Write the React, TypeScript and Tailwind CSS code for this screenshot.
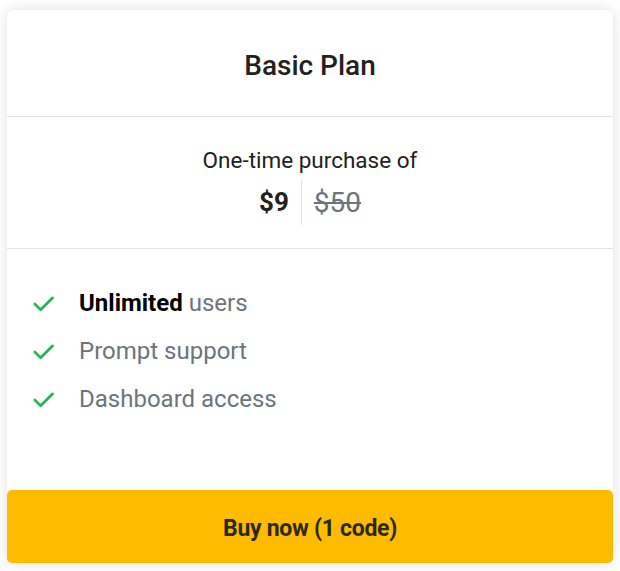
import React from 'react';

const features: { bold?: string; text: string }[] = [
  { bold: 'Unlimited', text: 'users' },
  { text: 'Prompt support' },
  { text: 'Dashboard access' },
];

const Check: React.FC = () => (
  <svg width="23" height="23" viewBox="0 0 24 24" fill="none" className="shrink-0">
    <path d="M3 12.5l6 6L21.5 6" stroke="#1fb84f" strokeWidth="2.7" strokeLinecap="round" strokeLinejoin="round" />
  </svg>
);

export default function App() {
  return (
    <div className="min-h-[571px] w-[620px] bg-white pt-[10px] px-[7px] font-['Roboto',sans-serif]">
      <div className="bg-white rounded-[6px] shadow-[0_0_14px_rgba(0,0,0,0.13)] flex flex-col">
        {/* Header */}
        <div className="h-[107px] flex items-center justify-center border-b border-[#e3e3e3] pt-[5px]">
          <h2 className="text-[28px] font-medium text-[#212121] leading-none">Basic Plan</h2>
        </div>

        {/* Pricing */}
        <div className="h-[132px] flex flex-col items-center border-b border-[#e3e3e3] pt-[30px]">
          <p className="text-[22.5px] text-[#212121] leading-[26px]">One-time purchase of</p>
          <div className="flex items-stretch mt-[7px] h-[45px]">
            <span className="text-[26px] font-bold text-[#212121] pr-[12px] flex items-center">$9</span>
            <span className="w-px bg-[#e3e3e3]" />
            <span className="text-[28px] text-[#6c757d] line-through decoration-2 pl-[12px] flex items-center">$50</span>
          </div>
        </div>

        {/* Features */}
        <ul className="flex flex-col pt-[30px] pb-[67px] px-[25px]">
          {features.map((f, i) => (
            <li key={i} className="h-[48px] flex items-center gap-[24px]">
              <Check />
              <span className="text-[24px] text-[#6c757d]">
                {f.bold && <span className="font-bold text-black">{f.bold} </span>}
                {f.text}
              </span>
            </li>
          ))}
        </ul>

        {/* Button */}
        <button className="h-[73px] w-full rounded-[5px] bg-[#ffbb00] text-[23px] font-bold text-[#2a2a0f] tracking-[-0.3px] pt-[5px] flex items-center justify-center">
          Buy now (1 code)
        </button>
      </div>
    </div>
  );
}
